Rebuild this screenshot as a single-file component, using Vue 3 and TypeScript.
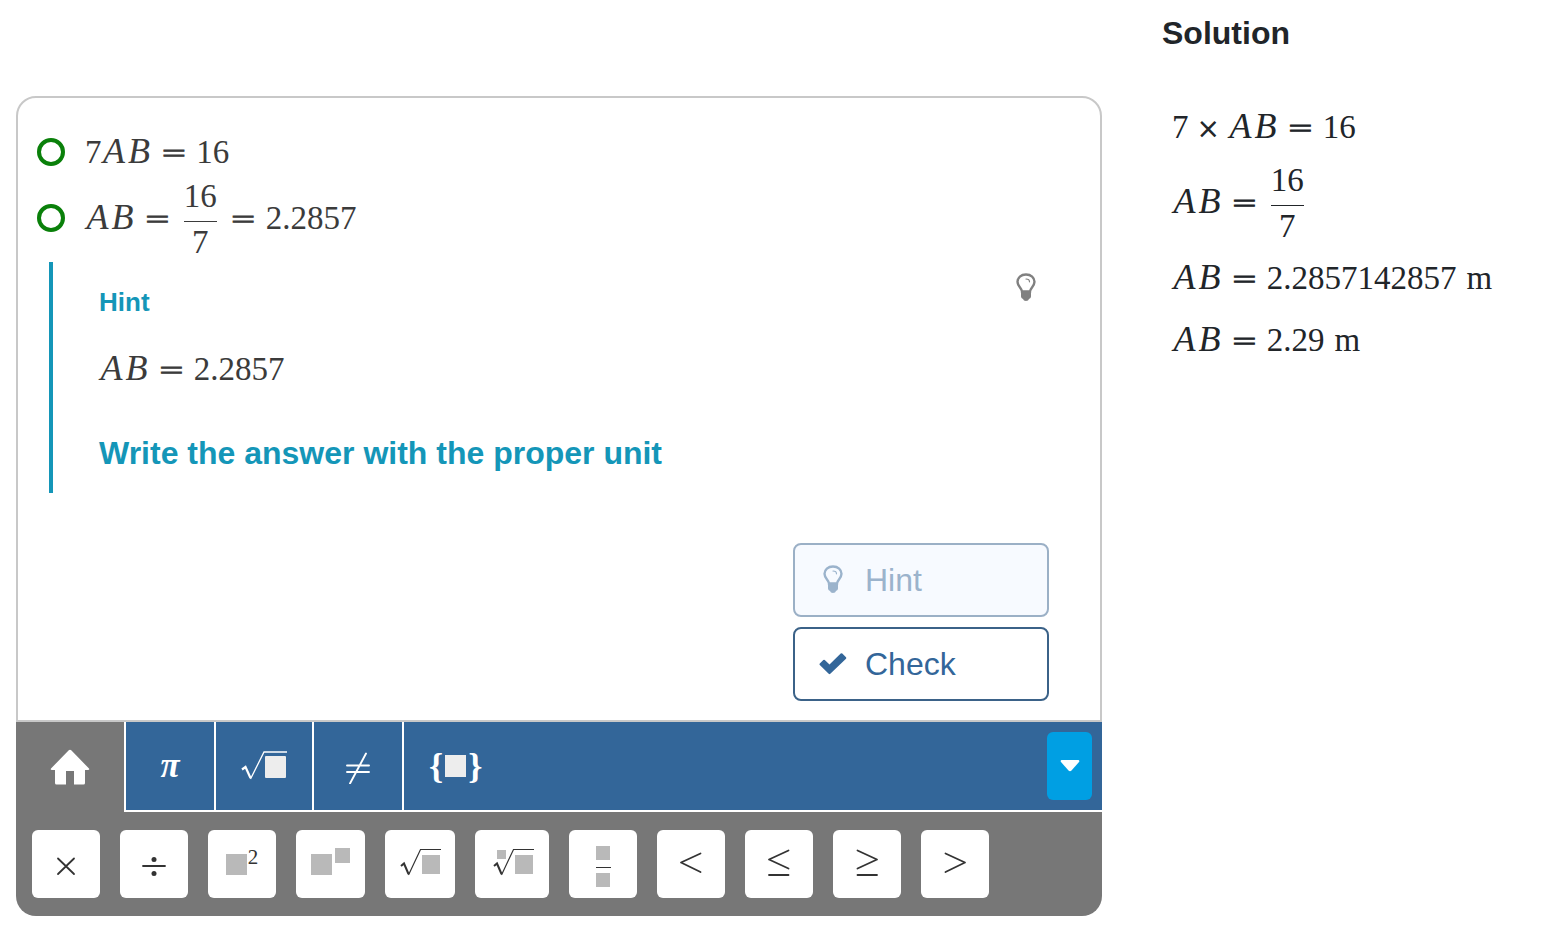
<script setup lang="ts">
import { h, ref } from 'vue'
import type { FunctionalComponent, VNode } from 'vue'

type Token =
  | { kind: 'id' | 'num' | 'rel' | 'op' | 'unit'; text: string }
  | { kind: 'frac'; top: string; bottom: string }

const id = (text: string): Token => ({ kind: 'id', text })
const num = (text: string): Token => ({ kind: 'num', text })
const unit = (text: string): Token => ({ kind: 'unit', text })
const times: Token = { kind: 'op', text: '×' }
const equals: Token = { kind: 'rel', text: '=' }
const frac = (top: string, bottom: string): Token => ({ kind: 'frac', top, bottom })

const Equation: FunctionalComponent<{ tokens: Token[] }> = (props) =>
  h(
    'span',
    { class: 'eq' },
    props.tokens.map((t): VNode =>
      t.kind === 'frac'
        ? h('span', { class: 'eq-frac' }, [
            h('span', { class: 'eq-top' }, t.top),
            h('span', { class: 'eq-bottom' }, t.bottom),
          ])
        : h('span', { class: `eq-${t.kind}` }, t.text),
    ),
  )
Equation.props = ['tokens']

const steps: Token[][] = [
  [num('7'), id('A'), id('B'), equals, num('16')],
  [id('A'), id('B'), equals, frac('16', '7'), equals, num('2.2857')],
]
const hintLine: Token[] = [id('A'), id('B'), equals, num('2.2857')]
const solution: Token[][] = [
  [num('7'), times, id('A'), id('B'), equals, num('16')],
  [id('A'), id('B'), equals, frac('16', '7')],
  [id('A'), id('B'), equals, num('2.2857142857'), unit('m')],
  [id('A'), id('B'), equals, num('2.29'), unit('m')],
]
const hasFraction = (line: Token[]) => line.some((t) => t.kind === 'frac')

const tabs = [
  { name: 'home', label: 'Home' },
  { name: 'pi', label: 'Symbols' },
  { name: 'root', label: 'Roots' },
  { name: 'neq', label: 'Relations' },
  { name: 'set', label: 'Sets' },
]
const activeTab = ref('home')

const keys = [
  { name: 'times', label: 'Multiply', path: 'M4 10.5L20 26M20 10.5L4 26' },
  { name: 'divide', label: 'Divide', path: 'M1 18H23', dots: true },
  { name: 'square', label: 'Squared' },
  { name: 'power', label: 'Power' },
  { name: 'sqrt', label: 'Square root' },
  { name: 'nthroot', label: 'Nth root' },
  { name: 'fraction', label: 'Fraction' },
  { name: 'lt', label: 'Less than', path: 'M21.500 5.500L2 14.500L21.500 24' },
  { name: 'le', label: 'Less than or equal', path: 'M21.500 2.500L2 11.500L21.500 20.500M2 27H21.500' },
  { name: 'ge', label: 'Greater than or equal', path: 'M2.500 2.500L22 11.500L2.500 20.500M2.500 27H22' },
  { name: 'gt', label: 'Greater than', path: 'M2.500 5.500L22 14.500L2.500 24' },
]
</script>

<template>
  <main class="page">
    <section class="editor">
      <div class="work">
        <div v-for="(step, i) in steps" :key="i" class="step">
          <span class="ring"></span>
          <Equation :tokens="step" />
        </div>

        <div class="hint">
          <div class="hint-body">
            <h3 class="hint-title">Hint</h3>
            <p class="hint-eq"><Equation :tokens="hintLine" /></p>
            <p class="hint-text">Write the answer with the proper unit</p>
          </div>
          <svg class="bulb" viewBox="0 0 20 28" aria-hidden="true">
            <path d="M6 18.500C6 15 1.500 13.500 1.500 8.800C1.500 4.500 5 1.500 10 1.500S18.500 4.500 18.500 8.800C18.500 13.500 14 15 14 18.500Z" fill="none" stroke="currentColor" stroke-width="2.400" />
            <path d="M5 18H15V23.500Q15 25 13 26Q12.500 28 10 28T7 26Q5 25 5 23.500Z" fill="currentColor" />
            <path d="M10 6C12 6 13.500 7 13.500 8.800" fill="none" stroke="currentColor" stroke-width="1.200" stroke-linecap="round" />
          </svg>
        </div>

        <div class="actions">
          <button class="action" type="button" disabled>
            <svg class="action-icon" viewBox="-4 1 28 28" aria-hidden="true">
              <path d="M6 18.500C6 15 1.500 13.500 1.500 8.800C1.500 4.500 5 1.500 10 1.500S18.500 4.500 18.500 8.800C18.500 13.500 14 15 14 18.500Z" fill="none" stroke="currentColor" stroke-width="2.400" />
              <path d="M5 18H15V23.500Q15 25 13 26Q12.500 28 10 28T7 26Q5 25 5 23.500Z" fill="currentColor" />
              <path d="M10 6C12 6 13.500 7 13.500 8.800" fill="none" stroke="currentColor" stroke-width="1.200" stroke-linecap="round" />
            </svg>
            Hint
          </button>
          <button class="action" type="button">
            <svg class="action-icon" viewBox="0 1 28 28" aria-hidden="true">
              <path d="M.8 14.500L4.300 11Q5 10.300 5.800 11L10.500 15.600L21.700 4.600Q22.500 3.800 23.300 4.600L27 8.200Q27.700 9 27 9.800L11.300 24.800Q10.500 25.500 9.700 24.800L.8 16Q0 15.300 .8 14.500Z" fill="currentColor" />
            </svg>
            Check
          </button>
        </div>
      </div>

      <div class="toolbar">
        <button
          v-for="tab in tabs"
          :key="tab.name"
          type="button"
          class="tab"
          :class="['tab-' + tab.name, { active: activeTab === tab.name }]"
          :aria-label="tab.label"
          @click="activeTab = tab.name"
        >
          <svg v-if="tab.name === 'home'" class="home" viewBox="0 0 40 36" aria-hidden="true">
            <path d="M18.500 1.500Q20 0 21.500 1.500L39 19.500Q40 21 38 21H35V34Q35 35.500 33.500 35.500H24V22H16V35.500H6.500Q5 35.500 5 34V21H2Q0 21 1 19.500Z" fill="currentColor" />
          </svg>
          <span v-else-if="tab.name === 'pi'" class="pi">π</span>
          <svg v-else-if="tab.name === 'root'" class="root" viewBox="0 0 46 32" aria-hidden="true">
            <path d="M1 19.500L4.500 17L9.500 28" fill="none" stroke="currentColor" stroke-width="2.200" />
            <path d="M9.500 29L23 2H46" fill="none" stroke="currentColor" stroke-width="1.300" />
            <rect x="24" y="6" width="21" height="22" rx="1" fill="#ededed" />
          </svg>
          <svg v-else-if="tab.name === 'neq'" class="neq" viewBox="0 0 24 32" aria-hidden="true">
            <path d="M1 13.500H23M1 20H23M4 31.500L20 1.500" fill="none" stroke="currentColor" stroke-width="1.900" stroke-linecap="round" />
          </svg>
          <span v-else class="braces">{<i class="slot"></i>}</span>
        </button>
        <button class="collapse" type="button" aria-label="Collapse keyboard">
          <svg class="caret" viewBox="0 0 20 12" aria-hidden="true">
            <path d="M1.500 0H18.500Q20 .5 19 2L11.500 10.500Q10 12 8.500 10.500L1 2Q0 .5 1.500 0Z" fill="currentColor" />
          </svg>
        </button>
      </div>

      <div class="keys">
        <button v-for="key in keys" :key="key.name" type="button" class="key" :class="'key-' + key.name" :aria-label="key.label">
          <svg v-if="key.path" class="sign" viewBox="0 0 24 32" aria-hidden="true">
            <path :d="key.path" fill="none" stroke="currentColor" stroke-width="1.800" stroke-linecap="round" stroke-linejoin="round" />
            <template v-if="key.dots">
              <circle cx="12" cy="11.500" r="2.500" fill="currentColor" />
              <circle cx="12" cy="25.500" r="2.500" fill="currentColor" />
            </template>
          </svg>
          <template v-else-if="key.name === 'square'"><i class="base"></i><sup class="exp">2</sup></template>
          <template v-else-if="key.name === 'power'"><i class="base"></i><i class="exp-slot"></i></template>
          <svg v-else-if="key.name === 'sqrt'" class="glyph" viewBox="0 0 42 32" aria-hidden="true">
            <path d="M2 18L5 15.500L9.500 26" fill="none" stroke="#333" stroke-width="2" />
            <path d="M9.500 27L21.500 1.500H42" fill="none" stroke="#333" stroke-width="1.200" />
            <rect x="23" y="7" width="18" height="19" fill="#b9b9b9" />
          </svg>
          <svg v-else-if="key.name === 'nthroot'" class="glyph" viewBox="-1 0 42 32" aria-hidden="true">
            <path d="M2 18L5 15.500L9.500 26" fill="none" stroke="#333" stroke-width="2" />
            <path d="M9.500 27L21.500 1.500H42" fill="none" stroke="#333" stroke-width="1.200" />
            <rect x="23" y="7" width="18" height="19" fill="#b9b9b9" />
            <rect x="5" y="2" width="9" height="9" fill="#b9b9b9" />
          </svg>
          <span v-else class="stack"><i></i><b></b><i></i></span>
        </button>
      </div>
    </section>

    <aside class="solution">
      <h2 class="solution-title">Solution</h2>
      <p v-for="(line, i) in solution" :key="i" class="solution-line" :class="{ tall: hasFraction(line) }">
        <Equation :tokens="line" />
      </p>
    </aside>
  </main>
</template>

<style>
body {
  background: #fff;
}
.eq {
  font-family: 'Liberation Serif', serif;
  font-size: 33px;
  line-height: 38px;
  white-space: nowrap;
}
.eq-id {
  display: inline-block;
  width: 25px;
  font-size: 36px;
  font-style: italic;
  line-height: 38px;
  text-align: center;
}
.eq-rel,
.eq-op {
  display: inline-block;
  font-family: 'DejaVu Sans', sans-serif;
  font-weight: 200;
  line-height: 32px;
  -webkit-text-stroke: 1px currentColor;
}
.eq-rel {
  margin: 0 9px;
  font-size: 32px;
}
.eq-op {
  margin: 0 8px;
  font-size: 28px;
}
.eq-unit {
  margin-left: 10px;
}
.eq-frac {
  display: inline-block;
  vertical-align: middle;
  margin: 0 4px;
  text-align: center;
}
.eq-top,
.eq-bottom {
  display: block;
}
.eq-top {
  padding-bottom: 10px;
  line-height: 30px;
  border-bottom: 1px solid currentColor;
}
.eq-bottom {
  line-height: 40px;
}
</style>

<style scoped>
.page {
  display: grid;
  grid-template-columns: minmax(0, 1086fr) minmax(0, 364fr);
  column-gap: 60px;
  align-items: start;
  padding: 0 16px;
  font-family: 'Liberation Sans', Arial, sans-serif;
}
h2,
h3,
p {
  margin: 0;
}
button {
  font-family: inherit;
  cursor: pointer;
}
.editor {
  margin-top: 96px;
}
.work {
  padding-top: 34px;
  padding-bottom: 19px;
  border: 2px solid #c8c8c8;
  border-radius: 20px 20px 0 0;
  color: #3b3b3b;
}
.step {
  display: flex;
  align-items: baseline;
  gap: 20px;
  padding-left: 19px;
}
.step + .step {
  margin-top: 10px;
}
.ring {
  box-sizing: border-box;
  display: flex;
  align-items: flex-start;
  flex: none;
  width: 28px;
  height: 28px;
  border: 4px solid #0a800a;
  border-radius: 50%;
}
/* Sets the ring's baseline so that it centres on the digits beside it. */
.ring::before {
  content: '';
  width: 1px;
  height: 21px;
}
.hint {
  display: flex;
  justify-content: space-between;
  align-items: flex-start;
  margin-left: 31px;
  padding: 11px 64px 20px 46px;
  border-left: 4px solid #1496b8;
}
.hint-body {
  padding-top: 13px;
}
.hint-title,
.hint-text {
  color: #1496b8;
  font-weight: 700;
}
.hint-title {
  font-size: 26px;
  line-height: 32px;
}
.hint-eq {
  margin-top: 31px;
  line-height: 38px;
}
.hint-text {
  margin-top: 39px;
  font-size: 32px;
  line-height: 40px;
}
.bulb {
  width: 20px;
  height: 28px;
  color: #808080;
}
.actions {
  display: flex;
  flex-direction: column;
  align-items: flex-end;
  gap: 10px;
  margin: 50px 51px 0 0;
}
.action {
  box-sizing: border-box;
  display: flex;
  align-items: center;
  gap: 18px;
  width: 256px;
  height: 74px;
  padding: 0 24px;
  border: 2px solid #3b6288;
  border-radius: 8px;
  background: #fff;
  color: #336699;
  font-size: 32px;
}
.action:disabled {
  border-color: #9bb0c6;
  background: #f7faff;
  color: #9bb3cc;
  cursor: default;
}
.action-icon {
  width: 28px;
  height: 28px;
  overflow: visible;
}
.toolbar {
  display: flex;
  height: 88px;
  border-bottom: 2px solid #fff;
  background: #336699;
}
.tab {
  box-sizing: border-box;
  display: flex;
  align-items: center;
  justify-content: center;
  min-width: 90px;
  padding: 0 25px;
  border: 0;
  border-left: 2px solid #fff;
  background: #336699;
  color: #fff;
}
.tab.active {
  min-width: 108px;
  margin-bottom: -2px;
  border-left: 0;
  background: #777;
}
.home {
  width: 40px;
  height: 36px;
}
.pi {
  font: italic bold 35px 'Liberation Serif', serif;
}
.root {
  width: 46px;
  height: 32px;
}
.neq {
  width: 24px;
  height: 32px;
  margin-top: 4px;
}
.braces {
  display: flex;
  align-items: center;
  font: bold 36px 'Liberation Serif', serif;
}
.slot {
  width: 21px;
  height: 22px;
  margin: 0 2px;
  background: #ededed;
}
.collapse {
  display: flex;
  align-items: center;
  justify-content: center;
  width: 45px;
  margin: 10px 10px 10px auto;
  padding: 0;
  border: 0;
  border-radius: 6px;
  background: #009fe3;
  color: #fff;
}
.caret {
  width: 20px;
  height: 12px;
}
.keys {
  display: flex;
  flex-wrap: wrap;
  gap: 20px;
  padding: 18px 16px;
  border-radius: 0 0 20px 20px;
  background: #777;
}
.key {
  box-sizing: border-box;
  display: flex;
  align-items: center;
  justify-content: center;
  min-width: 68px;
  height: 68px;
  padding: 0 14px;
  border: 0;
  border-radius: 6px;
  background: #fff;
  color: #333;
}
.key-power {
  padding: 0 15px;
}
.key-nthroot {
  padding: 0 16px;
}
.sign {
  width: 24px;
  height: 32px;
}
.base {
  width: 21px;
  height: 21px;
  background: #b9b9b9;
}
.exp {
  padding: 0 0 14px 1px;
  font: 21px 'Liberation Serif', serif;
}
.exp-slot {
  width: 15px;
  height: 15px;
  margin: 0 0 18px 3px;
  background: #b9b9b9;
}
.glyph {
  width: 42px;
  height: 32px;
  overflow: visible;
}
.stack {
  display: grid;
  justify-items: center;
  row-gap: 7px;
  padding-top: 4px;
}
.stack i {
  width: 14px;
  height: 14px;
  background: #b9b9b9;
}
.stack b {
  width: 15px;
  height: 1px;
  background: #333;
}
.stack i:last-child {
  margin-top: -2px;
}
.solution {
  color: #212529;
}
.solution-title {
  padding: 13px 0 42px;
  font-size: 32px;
  line-height: 40px;
}
.solution-line {
  display: flex;
  align-items: center;
  min-height: 62px;
  padding-left: 10px;
}
.solution-line.tall {
  padding-top: 8px;
}
</style>
